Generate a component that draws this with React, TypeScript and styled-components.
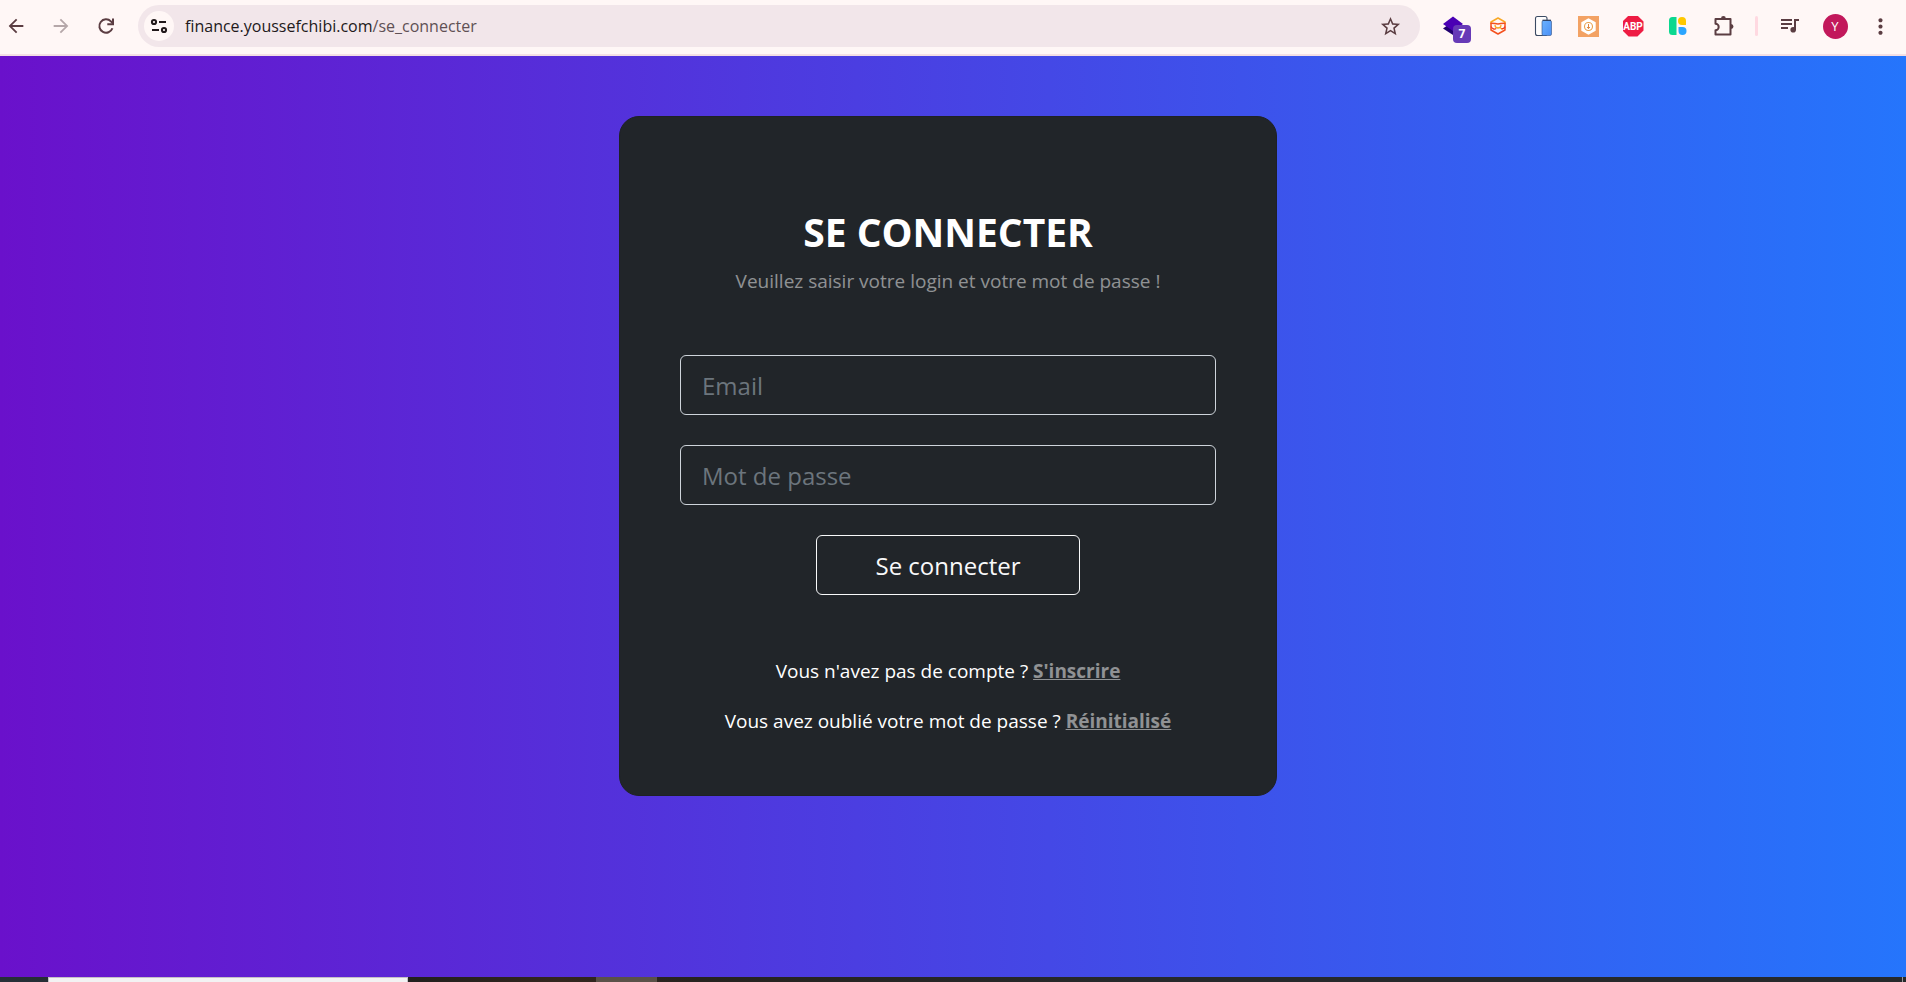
import React from "react";
import styled, { createGlobalStyle } from "styled-components";
import { MdArrowBack, MdArrowForward, MdMoreVert, MdStarBorder } from "react-icons/md";

const GlobalStyle = createGlobalStyle`
  *, *::before, *::after { box-sizing: border-box; }
  body {
    margin: 0;
    font-family: "Open Sans", "Noto Sans", sans-serif;
  }
  button, input { font: inherit; }
`;

const Screen = styled.div`
  min-height: 100vh;
  display: flex;
  flex-direction: column;
`;

const BrowserBar = styled.header`
  display: flex;
  align-items: center;
  gap: 13px;
  height: 56px;
  padding: 0 10px 2px 0;
  background: #fff7f6;
  border-bottom: 2px solid #f4dfe4;
`;

const BarButton = styled.button<{ $faded?: boolean }>`
  position: relative;
  flex: none;
  display: flex;
  align-items: center;
  justify-content: center;
  width: 32px;
  height: 32px;
  padding: 0;
  border: 0;
  background: none;
  color: ${(p) => (p.$faded ? "#b5a7a9" : "#5b3d42")};
`;

const AddressBar = styled.div`
  flex: 1;
  display: flex;
  align-items: center;
  height: 42px;
  margin: 0 4px 0 3px;
  padding: 0 14px 0 6px;
  border-radius: 21px;
  background: #f2e6ea;
`;

const SiteButton = styled(BarButton)`
  width: 30px;
  height: 30px;
  border-radius: 50%;
  background: #fff7f6;
  color: #22191b;
`;

const Url = styled.div`
  flex: 1;
  padding-left: 11px;
  font-size: 16px;
  line-height: 24px;
  color: #22191b;
`;

const UrlPath = styled.span`
  color: #5f5054;
`;

const Badge = styled.span`
  position: absolute;
  left: 16px;
  top: 15px;
  width: 18px;
  height: 18px;
  border-radius: 4px;
  background: #673ab7;
  color: #fff;
  font-size: 12px;
  font-weight: 700;
  line-height: 18px;
  text-align: center;
`;

const BarDivider = styled.span`
  width: 3px;
  height: 20px;
  margin: 0 3px;
  border-radius: 2px;
  background: #ffd9e1;
`;

const Avatar = styled.span`
  width: 25px;
  height: 25px;
  border-radius: 50%;
  background: #c2185b;
  color: #fff;
  font-size: 13px;
  line-height: 25px;
  text-align: center;
`;

const Page = styled.main`
  flex: 1;
  display: flex;
  justify-content: center;
  align-items: flex-start;
  padding: 60px 10px 60px 0;
  background: linear-gradient(to right, #6a11cb, #2575fc);
`;

const Card = styled.form`
  display: flex;
  flex-direction: column;
  align-items: center;
  width: 100%;
  max-width: 658px;
  padding: 91px 60px 59px;
  border: 1px solid #1e2126;
  border-radius: 20px;
  background: #212529;
  color: #fff;
  font-size: 19px;
  line-height: 30px;
  text-align: center;
`;

const Title = styled.h2`
  margin: 0 0 10px;
  font-size: 39px;
  font-weight: 700;
  line-height: 48px;
  text-transform: uppercase;
`;

const Subtitle = styled.p`
  margin: 0 0 59px;
  color: rgba(255, 255, 255, 0.5);
`;

const Field = styled.input`
  width: 100%;
  height: 60px;
  margin-bottom: 30px;
  padding: 0 21px;
  border: 1px solid #ced4da;
  border-radius: 6px;
  background: transparent;
  color: #fff;
  font-size: 24px;

  &::placeholder {
    color: #6c757d;
    opacity: 1;
  }
`;

const SubmitButton = styled.button`
  min-width: 264px;
  height: 60px;
  margin-bottom: 61px;
  padding: 1px 20px 0;
  border: 1px solid #f8f9fa;
  border-radius: 6px;
  background: transparent;
  color: #f8f9fa;
  font-size: 24px;
`;

const Hint = styled.p`
  margin: 0;

  & + & {
    margin-top: 20px;
  }
`;

const HintLink = styled.a`
  color: rgba(255, 255, 255, 0.5);
  font-weight: 700;
  text-decoration: underline;
`;

const Taskbar = styled.footer`
  display: flex;
  height: 5px;
  padding-left: 48px;
  background: linear-gradient(to right, #263038 0, #22201e 420px, #33261e 560px, #26231f 700px, #26292b 60%);
`;

const TaskSearch = styled.div`
  width: 360px;
  border: 1px solid #c4c0c6;
  border-bottom: 0;
  background: #f3f2f3;
`;

const ActiveTask = styled.div`
  width: 61px;
  margin-left: 188px;
  background: #5a5148;
`;

const DesktopEdge = styled.div`
  width: 1px;
  margin: 0 3px 0 auto;
  background: #9a9a9a;
`;

const ReloadIcon = () => (
  <svg width="18" height="18" viewBox="0 0 18 18" fill="none" stroke="currentColor" strokeWidth="2">
    <path d="M15.4 11.2A6.7 6.7 0 1 1 13.9 4.4L15.6 6.1" />
    <path d="M16 1.5V7.2H10.3" />
  </svg>
);

const SiteIcon = () => (
  <svg width="18" height="18" viewBox="0 0 18 18" fill="none" stroke="currentColor" strokeWidth="2">
    <circle cx="4" cy="5" r="2.1" />
    <path d="M9 5H16M2 13H9" />
    <circle cx="14" cy="13" r="2.1" />
  </svg>
);

const LayersIcon = () => (
  <svg width="32" height="32" viewBox="0 0 32 32">
    <path d="M6 18.5 16 11.5 26 18.5 16 25Z" fill="#210070" />
    <path d="M6 14 16 6.5 26 14 16 21Z" fill="#4a00b4" />
  </svg>
);

const HexFaceIcon = () => (
  <svg width="18" height="20" viewBox="0 0 18 20" fill="none" strokeWidth="1.5" strokeLinejoin="round">
    <path d="M2 8V6L9 2 16 6V8" stroke="#f9a825" />
    <path d="M2 7.2C5 6.8 6 8 9 8S13 6.8 16 7.2V14L9 18 2 14Z" stroke="#f4511e" />
    <path d="M6 9C6 13 12 13 12 9M11.5 12 13.500 13.500" stroke="#f9a825" strokeWidth="1.3" />
    <path d="M2 10.5C3.500 13.500 6 13.500 7 12.500M16 10.500C15.500 12.500 13.500 13 12.500 12.500" stroke="#ee3d22" strokeWidth="1.300" />
  </svg>
);

const DevicesIcon = () => (
  <svg width="19" height="22" viewBox="0 0 19 22">
    <defs>
      <linearGradient id="phone" x2="1" y2="1">
        <stop stopColor="#6bb2ff" />
        <stop offset="1" stopColor="#4b8ff5" />
      </linearGradient>
    </defs>
    <rect x="1.5" y="1.5" width="11.5" height="19" rx="2" fill="#fffdfd" stroke="#3c4b63" strokeWidth="1.1" />
    <rect x="8" y="5.5" width="9.5" height="15" rx="1.5" fill="url(#phone)" stroke="#345384" strokeWidth="0.6" />
    <path d="M8.500 5.300H17" stroke="#2f4266" strokeWidth="1.300" />
  </svg>
);

const HexCoinIcon = () => (
  <svg width="21" height="21" viewBox="0 0 21 21">
    <rect width="21" height="21" fill="#f3a264" />
    <path d="M10.5 2.2 17.7 6.3V14.7L10.5 18.8 3.3 14.7V6.3Z" fill="#fff" />
    <circle cx="10.5" cy="10.5" r="4" fill="none" stroke="#e9a04e" strokeWidth="1.1" />
    <path d="M10.5 8V12.500M9 11 10.500 12.600 12 11" fill="none" stroke="#df8740" strokeWidth="1" />
  </svg>
);

const StopSign = styled.span`
  width: 21px;
  height: 21px;
  clip-path: polygon(29% 0, 71% 0, 100% 29%, 100% 71%, 71% 100%, 29% 100%, 0 71%, 0 29%);
  background: #ee1c43;
  color: #fff;
  font-family: Roboto, sans-serif;
  font-size: 10px;
  font-weight: 700;
  line-height: 22px;
  text-align: center;
`;

const TilesIcon = () => (
  <svg width="18" height="18" viewBox="0 0 18 18">
    <path d="M3.5 0H7.500V18H3.500A3.500 3.500 0 0 1 0 14.500V3.500A3.500 3.500 0 0 1 3.500 0Z" fill="#0bd88f" />
    <path d="M13 0A4 4 0 0 1 17 4V8H13A4 4 0 0 1 13 0Z" fill="#ffc800" />
    <path d="M9.500 10H13.500A4 4 0 1 1 9.500 14Z" fill="#2ba5ff" />
  </svg>
);

const PuzzleIcon = () => (
  <svg width="22" height="22" viewBox="0 0 22 22" fill="none" stroke="currentColor" strokeWidth="2" strokeLinejoin="round">
    <path d="M3.500 4H18.500V19.500H3.500V15.200A3.200 3.200 0 0 0 3.500 8.800Z" />
    <path d="M9 3.500A2.400 2.400 0 0 1 13.800 3.500ZM19 9A2.500 2.500 0 0 1 19 14Z" fill="currentColor" stroke="none" />
  </svg>
);

const QueueIcon = () => (
  <svg width="20" height="16" viewBox="0 0 20 16" fill="none" stroke="currentColor" strokeWidth="2">
    <path d="M1 2H12M1 6H12M1 10H8M19 2H15V12" />
    <circle cx="13.2" cy="11.800" r="2.800" fill="currentColor" stroke="none" />
  </svg>
);

export default function App() {
  return (
    <Screen>
      <GlobalStyle />
      <BrowserBar>
        <BarButton aria-label="Retour"><MdArrowBack size={22} /></BarButton>
        <BarButton aria-label="Avancer" $faded><MdArrowForward size={22} /></BarButton>
        <BarButton aria-label="Actualiser"><ReloadIcon /></BarButton>
        <AddressBar>
          <SiteButton aria-label="Informations du site"><SiteIcon /></SiteButton>
          <Url>finance.youssefchibi.com<UrlPath>/se_connecter</UrlPath></Url>
          <BarButton aria-label="Favori"><MdStarBorder size={23} /></BarButton>
        </AddressBar>
        <BarButton aria-label="Calques"><LayersIcon /><Badge>7</Badge></BarButton>
        <BarButton aria-label="Portefeuille"><HexFaceIcon /></BarButton>
        <BarButton aria-label="Appareils"><DevicesIcon /></BarButton>
        <BarButton aria-label="Jetons"><HexCoinIcon /></BarButton>
        <BarButton aria-label="Bloqueur"><StopSign>ABP</StopSign></BarButton>
        <BarButton aria-label="Tuiles"><TilesIcon /></BarButton>
        <BarButton aria-label="Extensions"><PuzzleIcon /></BarButton>
        <BarDivider />
        <BarButton aria-label="Multimédia"><QueueIcon /></BarButton>
        <BarButton aria-label="Profil"><Avatar>Y</Avatar></BarButton>
        <BarButton aria-label="Menu"><MdMoreVert size={25} /></BarButton>
      </BrowserBar>
      <Page>
        <Card onSubmit={(e: React.FormEvent) => e.preventDefault()}>
          <Title>Se connecter</Title>
          <Subtitle>Veuillez saisir votre login et votre mot de passe !</Subtitle>
          <Field type="email" placeholder="Email" aria-label="Email" />
          <Field type="password" placeholder="Mot de passe" aria-label="Mot de passe" />
          <SubmitButton type="submit">Se connecter</SubmitButton>
          <Hint>Vous n'avez pas de compte ? <HintLink href="#inscription">S'inscrire</HintLink></Hint>
          <Hint>Vous avez oublié votre mot de passe ? <HintLink href="#reinitialiser">Réinitialisé</HintLink></Hint>
        </Card>
      </Page>
      <Taskbar>
        <TaskSearch />
        <ActiveTask />
        <DesktopEdge />
      </Taskbar>
    </Screen>
  );
}
